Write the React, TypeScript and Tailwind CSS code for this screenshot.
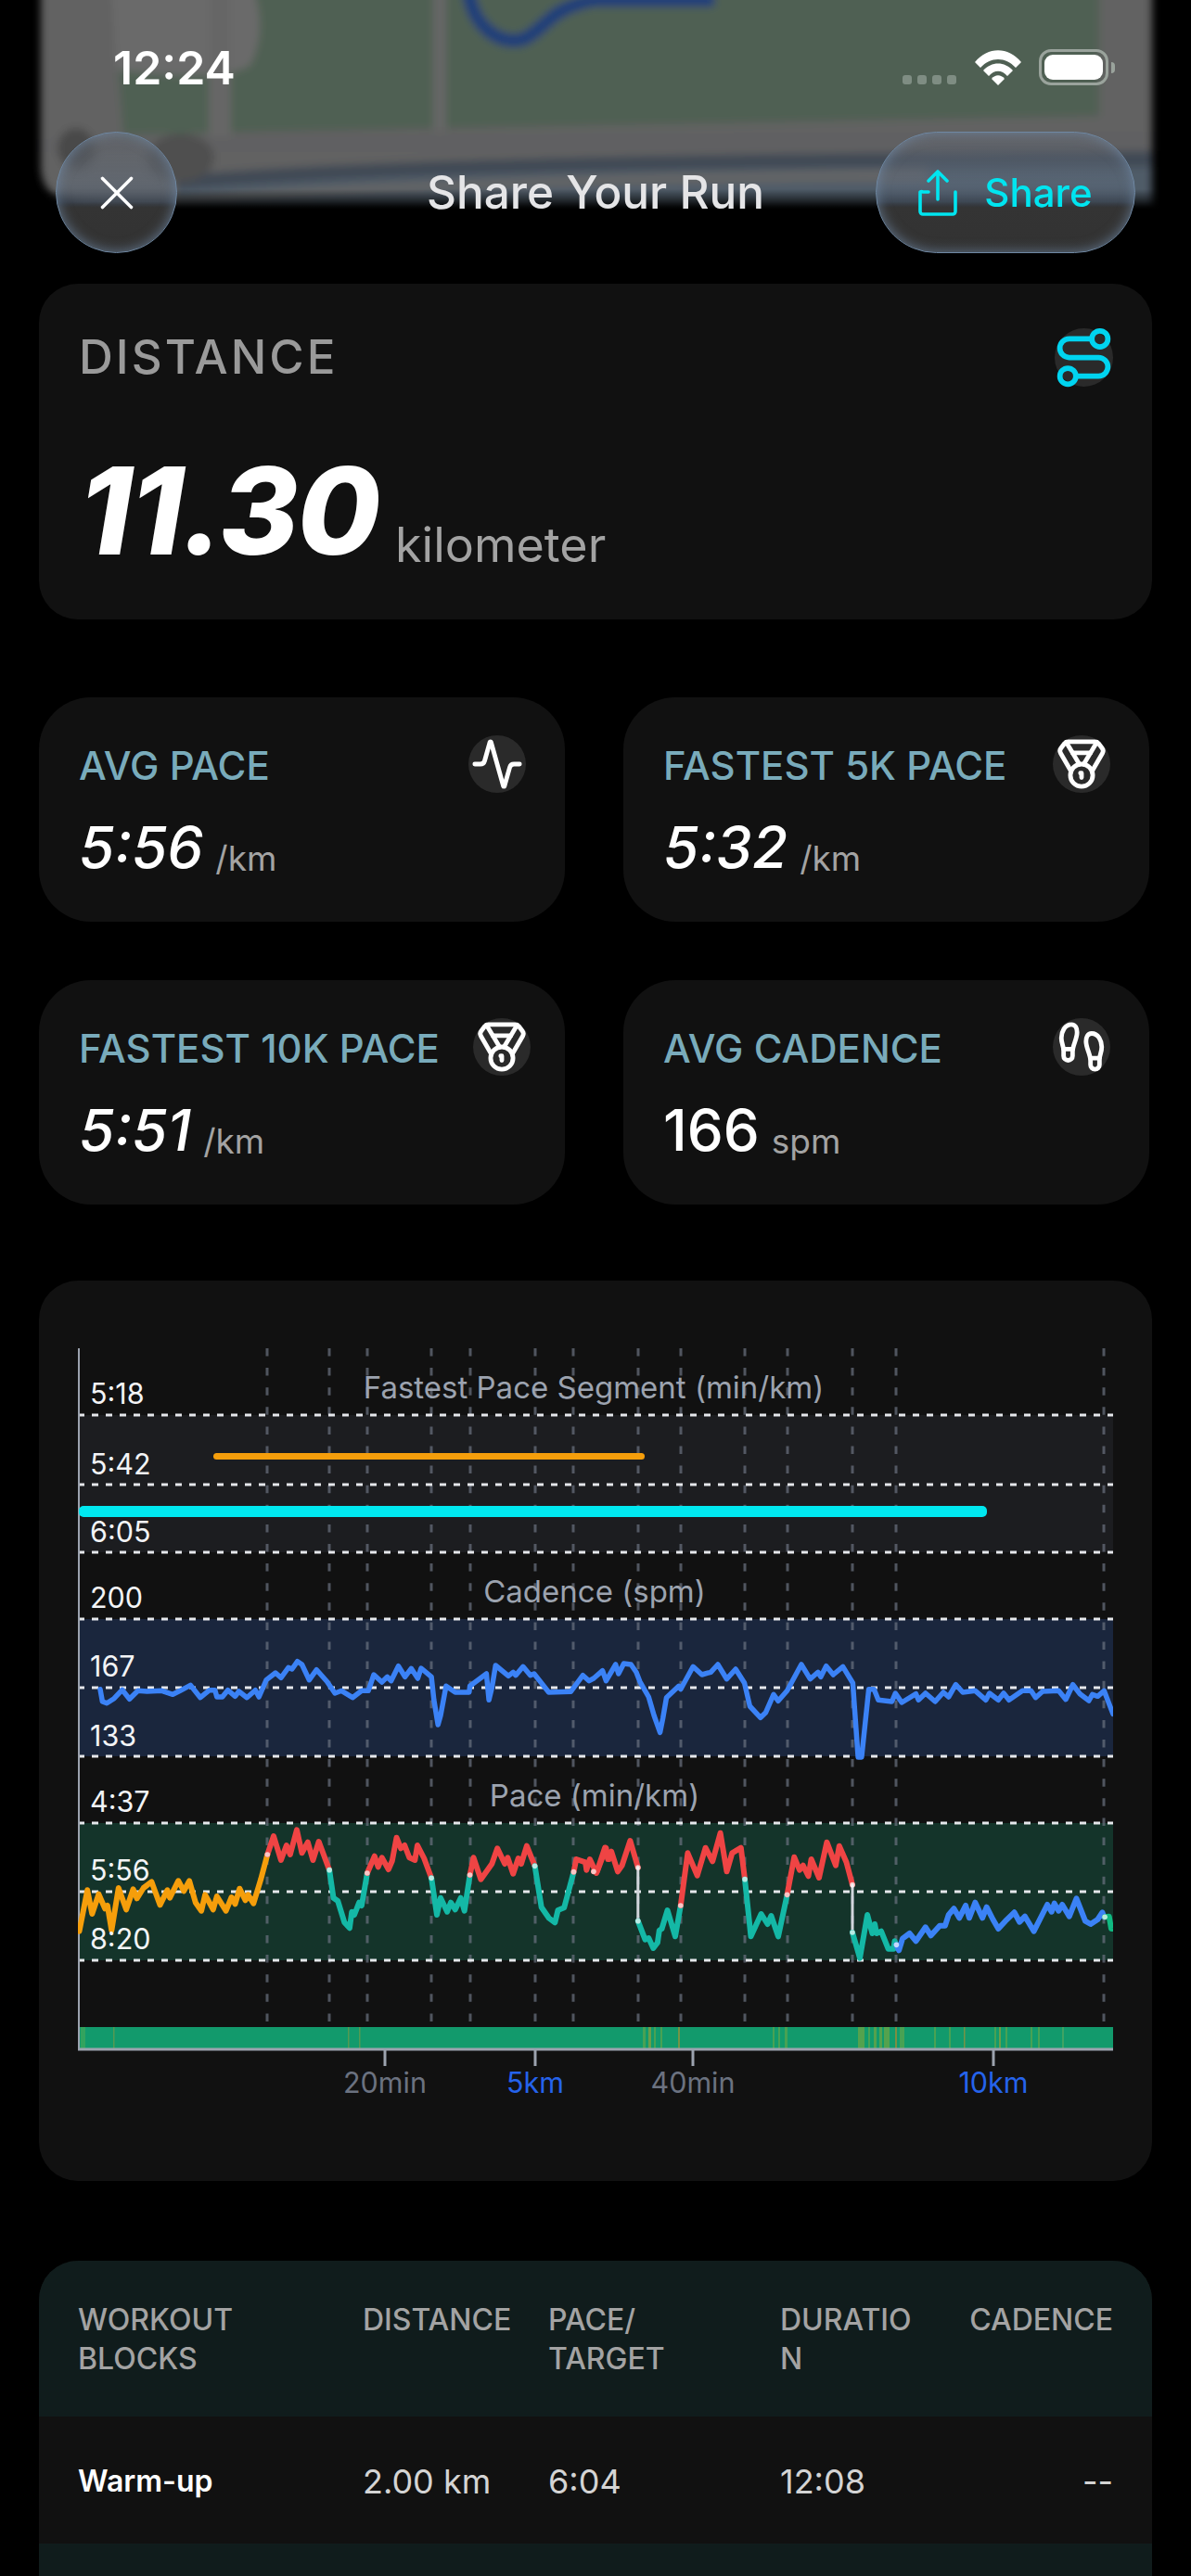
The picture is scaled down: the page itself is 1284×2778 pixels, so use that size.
import { Activity, Footprints, Medal, Route, X } from 'lucide-react'

type Pt = [number, number]

// Chart traces, written in crop coordinates and mapped to page pixels below
const left = (x: number, y: number, top: number): Pt => [40 + x / 2.529, top + y / 3]
const right = (x: number, y: number, top: number): Pt => [640 + x / 2.613, top + y / 3]

const toPath = (pts: Pt[]) => 'M' + pts.map(([x, y]) => `${x.toFixed(1)} ${y.toFixed(1)}`).join('L')

const cadenceLeft: number[][] = [[172,1205],[178,1245],[190,1250],[210,1235],[232,1207],[252,1237],[275,1210],[300,1212],[340,1210],[370,1222],[390,1210],[418,1192],[445,1232],[470,1208],[485,1208],[490,1230],[505,1230],[520,1208],[540,1228],[550,1212],[572,1232],[595,1208],[605,1230],[625,1175],[650,1152],[665,1168],[685,1135],[695,1140],[710,1115],[722,1125],[742,1175],[762,1142],[790,1180],[812,1218],[830,1210],[860,1232],[885,1210],[903,1210],[918,1158],[940,1182],[955,1165],[965,1178],[985,1130],[1003,1165],[1020,1138],[1038,1170],[1047,1137],[1075,1165],[1082,1240],[1093,1320],[1100,1290],[1115,1195],[1140,1215],[1178,1215],[1180,1195],[1225,1155],[1232,1240],[1240,1200],[1250,1128],[1285,1162],[1298,1150],[1305,1160],[1325,1132],[1345,1160],[1355,1155],[1395,1215],[1455,1213],[1488,1160],[1505,1178]]
const cadenceRight: number[][] = [[0,1170],[25,1145],[35,1178],[62,1125],[70,1155],[85,1122],[105,1125],[120,1150],[130,1180],[155,1230],[170,1290],[187,1345],[195,1300],[205,1232],[240,1195],[245,1205],[280,1132],[305,1158],[330,1150],[350,1125],[375,1172],[400,1140],[425,1185],[440,1260],[470,1297],[485,1280],[507,1222],[520,1243],[545,1210],[585,1125],[610,1172],[632,1150],[640,1165],[655,1130],[675,1158],[702,1132],[730,1185],[745,1425],[755,1425],[775,1205],[790,1205],[802,1240],[840,1245],[850,1218],[868,1248],[908,1220],[915,1240],[935,1218],[962,1245],[985,1215],[1000,1230],[1020,1190],[1040,1215],[1075,1210],[1105,1240],[1115,1218],[1140,1240],[1155,1218],[1170,1240],[1208,1210],[1232,1210],[1245,1232],[1265,1212],[1310,1210],[1330,1238],[1350,1190],[1370,1220],[1395,1242],[1405,1222],[1420,1228],[1438,1210],[1463,1285]]
const cadencePath = toPath([
  ...cadenceLeft.map(([x, y]) => left(x, y, 1420)),
  ...cadenceRight.map(([x, y]) => right(x, y, 1420)),
])

const ORANGE = '#f59e0b'
const RED = '#ef4444'
const TEAL = '#14b8a6'
const BLUE = '#3b82f6'
const WHITE = '#d1d5db'

const paceSegments: { color: string; side: 'l' | 'r'; pts: number[][] }[] = [
  { color: ORANGE, side: 'l', pts: [[115,548],[137,415],[150,492],[168,428],[185,475],[192,465],[203,545],[222,408],[243,478],[262,412],[272,442],[290,408],[312,388],[335,463],[355,415],[362,440],[385,385],[400,418],[415,385],[432,455],[448,482],[458,430],[480,478],[490,435],[515,482],[530,438],[540,460],[552,410],[568,448],[575,430],[590,458],[610,380],[628,300]] },
  { color: RED, side: 'l', pts: [[628,300],[645,240],[665,318],[680,270],[690,300],[708,220],[722,295],[738,260],[752,318],[768,258],[797,350]] },
  { color: TEAL, side: 'l', pts: [[797,350],[808,440],[820,450],[838,520],[852,538],[858,485],[865,495],[878,455],[885,465],[900,360]] },
  { color: RED, side: 'l', pts: [[900,360],[920,305],[930,340],[940,310],[958,348],[968,320],[980,245],[992,280],[1002,270],[1015,310],[1030,318],[1037,270],[1055,312],[1075,376]] },
  { color: TEAL, side: 'l', pts: [[1075,376],[1090,495],[1100,440],[1118,485],[1128,455],[1140,478],[1155,440],[1165,482],[1180,366]] },
  { color: RED, side: 'l', pts: [[1180,366],[1190,310],[1210,380],[1240,330],[1255,280],[1275,330],[1283,310],[1298,362],[1312,312],[1320,330],[1335,272],[1357,337]] },
  { color: TEAL, side: 'l', pts: [[1357,337],[1375,470],[1395,505],[1412,520],[1420,480],[1437,472],[1463,356]] },
  { color: RED, side: 'l', pts: [[1463,356],[1470,315],[1495,325],[1498,350],[1507,315],[1525,360],[1548,278],[1560,315]] },
  { color: RED, side: 'r', pts: [[0,355],[10,355],[35,278],[40,315],[50,290],[68,355],[80,335],[103,255],[125,342]] },
  { color: WHITE, side: 'r', pts: [[125,342],[125,515]] },
  { color: TEAL, side: 'r', pts: [[125,515],[145,575],[155,570],[168,603],[180,585],[185,545],[192,540],[208,480],[230,565],[245,465]] },
  { color: RED, side: 'r', pts: [[245,465],[265,295],[292,368],[315,278],[335,322],[357,230],[375,355],[390,295],[415,278],[426,380]] },
  { color: TEAL, side: 'r', pts: [[426,380],[443,565],[472,492],[490,525],[500,498],[520,565],[545,430]] },
  { color: RED, side: 'r', pts: [[545,430],[565,308],[580,350],[590,335],[605,370],[613,315],[635,375],[657,260],[682,335],[692,272],[712,325],[729,398]] },
  { color: WHITE, side: 'r', pts: [[729,398],[729,552]] },
  { color: TEAL, side: 'r', pts: [[729,552],[750,635],[771,495],[785,555],[792,525],[797,555],[810,548],[830,605],[845,605],[848,580],[853,592]] },
  { color: BLUE, side: 'r', pts: [[853,592],[860,610],[870,572],[890,555],[908,580],[935,535],[950,562],[975,530],[990,530],[1000,495],[1015,475],[1030,505],[1048,465],[1058,505],[1075,455],[1095,505],[1107,470],[1125,510],[1140,540],[1160,515],[1185,487],[1200,518],[1215,500],[1240,548],[1278,462],[1290,485],[1298,458],[1310,482],[1320,462],[1340,500],[1360,442],[1385,515],[1400,525],[1420,510],[1433,487],[1438,502]] },
  { color: '#10b981', side: 'r', pts: [[1440,502],[1452,500],[1458,540],[1463,540]] },
]

const verticals = [288, 355, 396, 465, 507, 577, 618, 688, 734, 803, 849, 919, 966, 1190]
const dashed = [1526, 1601, 1674, 1746, 1820, 1894, 1966, 2040, 2114]
const yLabels: [string, number][] = [
  ['5:18', 1514], ['5:42', 1590], ['6:05', 1663],
  ['200', 1734], ['167', 1808], ['133', 1883],
  ['4:37', 1954], ['5:56', 2028], ['8:20', 2102],
]
const stripes: [number, number, string][] = [
  [87, 5, '#3fa65a'], [122, 1.5, '#6a9a4a'], [375, 1.5, '#6a9a4a'], [387, 1.5, '#6a9a4a'],
  [693, 3, '#5aa54c'], [699, 3, '#8a9e3c'], [705, 2, '#5aa54c'], [712, 2, '#5aa54c'], [731, 2, '#95923a'],
  [833, 2, '#5aa54c'], [839, 2, '#5aa54c'], [846, 3, '#5aa54c'],
  [925, 7, '#6aa545'], [936, 2, '#5aa54c'], [942, 3, '#6aa545'], [948, 3, '#6aa545'], [953, 6, '#6aa545'], [965, 2, '#a08a35'], [970, 5, '#5aa54c'],
  [1007, 2, '#5aa54c'], [1023, 2, '#5aa54c'], [1039, 1.5, '#95923a'], [1072, 2, '#5aa54c'], [1077, 2, '#8a9e3c'], [1084, 2, '#5aa54c'],
  [1111, 2, '#5aa54c'], [1119, 2, '#5aa54c'], [1145, 2, '#4fa862'],
]
const ticks: [string, number, string][] = [
  ['20min', 415, '#6b7280'], ['5km', 577, '#2563eb'], ['40min', 747, '#6b7280'], ['10km', 1071, '#2563eb'],
]

const stats = [
  { label: 'AVG PACE', value: '5:56', unit: '/km', italic: true, icon: Activity },
  { label: 'FASTEST 5K PACE', value: '5:32', unit: '/km', italic: true, icon: Medal },
  { label: 'FASTEST 10K PACE', value: '5:51', unit: '/km', italic: true, icon: Medal },
  { label: 'AVG CADENCE', value: '166', unit: 'spm', italic: false, icon: Footprints },
]

const glass =
  'border-[1.5px] border-[#6f88a3] backdrop-blur-[5px] bg-[linear-gradient(to_bottom,rgba(100,105,115,0.3)_0%,rgba(95,110,130,0.5)_58%,#343434_63%,#323232_100%)] shadow-[inset_0_0_14px_rgba(115,140,170,0.75)]'

function MapBackdrop() {
  return (
    <svg className="absolute top-0 left-0" width="1284" height="240" viewBox="0 0 1284 240">
      <defs>
        <filter id="soft" x="-5%" y="-5%" width="110%" height="110%">
          <feGaussianBlur stdDeviation="4" />
        </filter>
        <linearGradient id="fade" x1="0" y1="0" x2="0" y2="1">
          <stop offset="0" stopColor="#000" stopOpacity="0" />
          <stop offset="1" stopColor="#000" stopOpacity="1" />
        </linearGradient>
      </defs>
      <g filter="url(#soft)">
        <path d="M44 -20H1242V190Q1242 222 1205 224H110Q44 222 44 180Z" fill="#626262" />
        <path d="M120 -20H1185V125L133 145Z" fill="#506152" />
        <path d="M120 -20H270Q290 30 270 70Q240 90 125 75Z" fill="#6a6a6a" />
        <rect x="225" y="-20" width="24" height="170" fill="#666666" />
        <rect x="467" y="-20" width="14" height="160" fill="#666666" />
        <path d="M505 -10C510 30 540 50 565 42C590 30 590 10 640 0L770 0" stroke="#1c3d7a" strokeWidth="14" fill="none" />
        <path d="M44 150Q400 145 1242 142V164H44Z" fill="#606162" />
        <path d="M190 190Q420 166 1242 163V180Q600 178 190 204Z" fill="#3f4954" />
        <path d="M190 204Q500 178 1242 180V224H190Z" fill="#505b68" />
        <path d="M190 214Q400 190 1000 182V196Q500 198 190 220Z" fill="#646566" />
        <ellipse cx="82" cy="160" rx="20" ry="22" fill="#4a4a4a" />
        <ellipse cx="195" cy="170" rx="36" ry="26" fill="#4f4f4f" />
      </g>
      <rect x="0" y="204" width="1284" height="22" fill="url(#fade)" />
      <rect x="0" y="226" width="1284" height="14" fill="#000" />
    </svg>
  )
}

function RunChart() {
  return (
    <svg width="1116" height="840" viewBox="84 1440 1116 840" className="block">
      <rect x="84" y="1526" width="1116" height="148" fill="#1c1d20" />
      <rect x="84" y="1746" width="1116" height="148" fill="#1a263d" />
      <rect x="84" y="1966" width="1116" height="148" fill="#14342a" />

      {verticals.map((x) => (
        <line key={x} x1={x} x2={x} y1="1454" y2="2186" stroke="#6b7280" strokeOpacity="0.7" strokeWidth="3" strokeDasharray="8.5 12.6" />
      ))}

      <rect x="84" y="2186" width="1116" height="24" fill="#129a6c" />
      <g opacity="0.75">
        {stripes.map(([x, w, c]) => (
          <rect key={x} x={x} y="2186" width={w} height="24" fill={c} />
        ))}
      </g>

      {dashed.map((y) => (
        <line key={y} x1="84" x2="1200" y1={y} y2={y} stroke="#e5e7eb" strokeWidth="3" strokeDasharray="7 8" />
      ))}

      <line x1="85" x2="85" y1="1454" y2="2211" stroke="#9ca3af" strokeWidth="2" />
      <line x1="84" x2="1200" y1="2210" y2="2210" stroke="#9ca3af" strokeWidth="3" />

      <rect x="230" y="1567" width="465" height="7" rx="3.5" fill="#f59e0b" />
      <rect x="85" y="1624" width="979" height="12" rx="5" fill="#00e8f0" />

      <path d={cadencePath} fill="none" stroke={BLUE} strokeWidth="5.5" strokeLinejoin="round" strokeLinecap="round" />

      {paceSegments.map((seg, i) => {
        const map = seg.side === 'l' ? left : right
        const pts = seg.pts.map(([x, y]) => map(x, y, 1900))
        return <path key={i} d={toPath(pts)} fill="none" stroke={seg.color} strokeWidth={seg.color === WHITE ? 3 : 6} strokeLinejoin="round" strokeLinecap="round" />
      })}
      {paceSegments.slice(1).map((seg, i) => {
        const map = seg.side === 'l' ? left : right
        const [x, y] = map(seg.pts[0][0], seg.pts[0][1], 1900)
        return <circle key={i} cx={x} cy={y} r="2.8" fill="#ffffff" fillOpacity="0.7" />
      })}

      <g fontSize="30.5" fill="#f3f4f6">
        {yLabels.map(([t, y]) => (
          <text key={t} x="97" y={y}>{t}</text>
        ))}
      </g>
      <g fontSize="33" fill="#9ca3af" textAnchor="middle">
        <text x="640" y="1508">Fastest Pace Segment (min/km)</text>
        <text x="641" y="1728">Cadence (spm)</text>
        <text x="641" y="1948">Pace (min/km)</text>
      </g>
      {ticks.map(([t, x, c]) => (
        <g key={t}>
          <line x1={x} x2={x} y1="2211" y2="2228" stroke="#9ca3af" strokeWidth="3" />
          <text x={x} y="2257" fontSize="30.5" fill={c} textAnchor="middle">{t}</text>
        </g>
      ))}
    </svg>
  )
}

export default function App() {
  return (
    <div className="relative h-[2778px] w-[1284px] overflow-hidden bg-black font-[Inter,sans-serif]">
      <MapBackdrop />

      {/* Status bar */}
      <div className="relative flex h-[142px] items-start justify-between pt-[46px] pl-[122px] pr-[82px]">
        <span className="text-[50px] leading-[54px] font-semibold text-white">12:24</span>
        <div className="flex items-start pt-[7px]">
          <div className="mt-[28px] mr-[20px] flex gap-[6px]">
            <i className="h-[10px] w-[10px] rounded-[3px] bg-[#7f8d83]" />
            <i className="h-[10px] w-[10px] rounded-[3px] bg-[#7f8d83]" />
            <i className="h-[10px] w-[10px] rounded-[3px] bg-[#7f8d83]" />
            <i className="h-[10px] w-[10px] rounded-[3px] bg-[#7f8d83]" />
          </div>
          <svg width="50" height="38" viewBox="0 0 50 38" className="mt-[1px] mr-[19px]">
            <path d="M0 13C14 -4 36 -4 50 13L44 19C33 7 17 7 6 19Z" fill="#fff" />
            <path d="M9 22C18 12 32 12 41 22L35 28C29 21 21 21 15 28Z" fill="#fff" />
            <path d="M18 31C22 26 28 26 32 31L25 38Z" fill="#fff" />
          </svg>
          <div className="flex items-center">
            <div className="flex h-[39px] w-[75px] items-center justify-center rounded-[13px] border-[3px] border-[#9aa39c]">
              <div className="h-[27px] w-[63px] rounded-[9px] bg-white" />
            </div>
            <div className="ml-[3px] h-[12px] w-[4px] rounded-r-full bg-[#9aa39c]" />
          </div>
        </div>
      </div>

      {/* Nav */}
      <div className="relative grid grid-cols-[1fr_auto_1fr] items-center px-[60px]">
        <div>
          <button className={`flex h-[131px] w-[131px] items-center justify-center rounded-full ${glass}`}>
            <X className="text-white" size={62} strokeWidth={1.4} />
          </button>
        </div>
        <h1 className="text-[49.5px] font-medium text-[#e5e5e7]">Share Your Run</h1>
        <div className="flex justify-end">
          <button className={`flex h-[131px] w-[280px] items-center justify-center gap-[29px] rounded-full ${glass}`}>
            <svg width="42" height="50" viewBox="0 0 42 50" fill="none" stroke="#00e5f0" strokeWidth="3.6" strokeLinecap="round" strokeLinejoin="round">
              <path d="M21 32V3M11 12L21 2L31 12" />
              <path d="M11 24H5A3 3 0 0 0 2 24V45A3 3 0 0 0 5 48H37A3 3 0 0 0 40 45V24" />
            </svg>
            <span className="text-[42px] font-medium text-[#00e5f0]">Share</span>
          </button>
        </div>
      </div>

      <main className="relative mt-[33px] flex flex-col px-[42px]">
        {/* Distance */}
        <section className="h-[362px] rounded-[42px] bg-[#111111] pt-[48px] pr-[42px] pl-[43px]">
          <div className="flex items-start justify-between">
            <span className="text-[51px] leading-[62px] font-medium tracking-[3px] text-[#9a9a9a]">DISTANCE</span>
            <div className="flex h-[63px] w-[63px] items-center justify-center rounded-full bg-[#2a2a2a]">
              <Route className="shrink-0 text-[#00d4f0]" size={69} strokeWidth={2} />
            </div>
          </div>
          <div className="mt-[74px] flex items-end">
            <span className="text-[130px] leading-[120px] font-extrabold tracking-[-2px] text-white italic">11.30</span>
            <span className="ml-[18px] text-[52px] leading-[46px] text-[#a3a3a3]">kilometer</span>
          </div>
        </section>

        {/* Stats */}
        <section className="mt-[84px] grid w-[1197px] grid-cols-[567px_567px] gap-x-[63px] gap-y-[63px]">
          {stats.map((s) => {
            const Icon = s.icon
            return (
              <div key={s.label} className="h-[242px] rounded-[56px] bg-[#111111] pt-[41px] pr-[37px] pl-[43px]">
                <div className="flex items-start justify-between">
                  <span className="pt-[7px] text-[42px] leading-[52px] font-medium whitespace-nowrap text-[#79abbb]">{s.label}</span>
                  <div className={`flex h-[62px] w-[62px] shrink-0 items-center justify-center rounded-full bg-[#2a2a2a] ${s.label === 'FASTEST 10K PACE' ? '' : 'mr-[5px]'}`}>
                    <Icon className="shrink-0 text-white" size={58} strokeWidth={2} />
                  </div>
                </div>
                <div className="mt-[24px] flex items-end gap-[13px]">
                  <span className={`text-[62px] leading-[70px] font-medium text-white ${s.italic ? 'italic' : ''}`}>{s.value}</span>
                  <span className="text-[37px] leading-[46px] text-[#a3a3a3]">{s.unit}</span>
                </div>
              </div>
            )
          })}
        </section>

        {/* Chart */}
        <section className="mt-[82px] h-[971px] rounded-[42px] bg-[#111111] px-[42px] pt-[59px]">
          <RunChart />
        </section>

        {/* Workout blocks */}
        <section className="mt-[86px] overflow-hidden rounded-t-[42px] bg-[#111111]">
          <div className="grid h-[168px] grid-cols-[307px_200px_250px_203px_1fr] bg-[#101c1c] px-[42px] pt-[43px] text-[32px] leading-[42px] font-medium text-[#a3a3a3]">
            <span>WORKOUT<br />BLOCKS</span>
            <span>DISTANCE</span>
            <span>PACE/<br />TARGET</span>
            <span className="w-[150px] wrap-anywhere">DURATION</span>
            <span className="text-right whitespace-nowrap">CADENCE</span>
          </div>
          <div className="grid h-[137px] grid-cols-[307px_200px_250px_203px_1fr] items-center px-[42px] pt-[3px] text-[36px] text-[#d4d4d4]">
            <span className="text-[32px] font-semibold text-white">Warm-up</span>
            <span>2.00 km</span>
            <span>6:04</span>
            <span>12:08</span>
            <span className="text-right">--</span>
          </div>
          <div className="h-[137px] bg-[#101c1c]" />
        </section>
      </main>
    </div>
  )
}
